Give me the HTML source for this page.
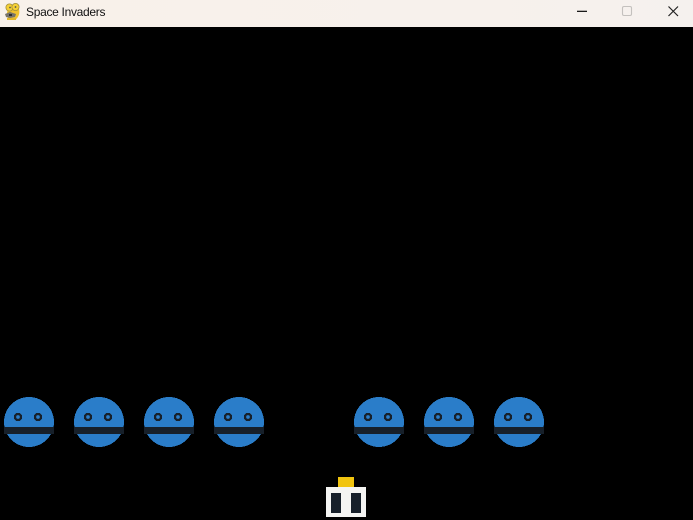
<!DOCTYPE html>
<html>
<head>
<meta charset="utf-8">
<title>Space Invaders</title>
<style>
html,body{margin:0;padding:0;background:#000;}
body{width:693px;height:520px;overflow:hidden;position:relative;font-family:"Liberation Sans",sans-serif;}
#bar{position:absolute;left:0;top:0;width:693px;height:27px;background:linear-gradient(90deg,#f8f1ea,#f7f1ec 70%,#f5f1ee);}
#title{position:absolute;left:26px;top:5px;font-size:12px;line-height:15px;color:#111;white-space:nowrap;letter-spacing:-0.3px;}
svg{position:absolute;left:0;top:0;}
</style>
</head>
<body>
<div id="bar"></div>
<div id="title">Space Invaders</div>
<svg width="693" height="520" viewBox="0 0 693 520">
  <defs>
    <g id="inv" shape-rendering="crispEdges">
      <circle cx="25" cy="25" r="25" fill="#2a7dc9"/>
      <rect x="0" y="30" width="50" height="7" fill="#17202a"/>
      <circle cx="14" cy="20" r="3" fill="none" stroke="#17202a" stroke-width="2.4"/>
      <circle cx="34" cy="20" r="3" fill="none" stroke="#17202a" stroke-width="2.4"/>
    </g>
  </defs>
  <!-- icon -->
  <g>
    <path d="M8 10 C6 13 7 17 9 20 L15 20 C19 17 20 13 19 9 Z" fill="#f0c22e"/>
    <path d="M5 14 L10 12 L16 14 L15 17 L10 18 L6 17 Z" fill="#77736a"/>
    <circle cx="9.5" cy="7.5" r="3.6" fill="#f5d033" stroke="#a48f3a" stroke-width="0.8"/>
    <circle cx="15.5" cy="7" r="3.6" fill="#f5d033" stroke="#a48f3a" stroke-width="0.8"/>
    <circle cx="10" cy="7.5" r="0.9" fill="#555"/>
    <circle cx="15.5" cy="7" r="0.9" fill="#555"/>
    <rect x="9" y="14" width="3" height="2" fill="#2f2f2b"/>
    <rect x="7" y="18" width="9" height="2" fill="#e2b82c"/>
  </g>
  <!-- window controls -->
  <rect x="577" y="10.7" width="10" height="1.3" fill="#1a1a1a"/>
  <rect x="622.5" y="6.5" width="9" height="9" rx="1.5" fill="none" stroke="#c4c1be" stroke-width="1.1"/>
  <path d="M668.5 6.5 L678 16 M678 6.5 L668.5 16" stroke="#222" stroke-width="1.2" fill="none"/>
  <!-- invaders -->
  <use href="#inv" x="4" y="397"/>
  <use href="#inv" x="74" y="397"/>
  <use href="#inv" x="144" y="397"/>
  <use href="#inv" x="214" y="397"/>
  <use href="#inv" x="354" y="397"/>
  <use href="#inv" x="424" y="397"/>
  <use href="#inv" x="494" y="397"/>
  <!-- ship -->
  <g shape-rendering="crispEdges">
    <rect x="338" y="477" width="16" height="10" fill="#f1c40f"/>
    <rect x="326" y="487" width="40" height="30" fill="#f4f4f2"/>
    <rect x="331" y="493" width="10" height="20" fill="#17202a"/>
    <rect x="351" y="493" width="10" height="20" fill="#17202a"/>
  </g>
</svg>
</body>
</html>
